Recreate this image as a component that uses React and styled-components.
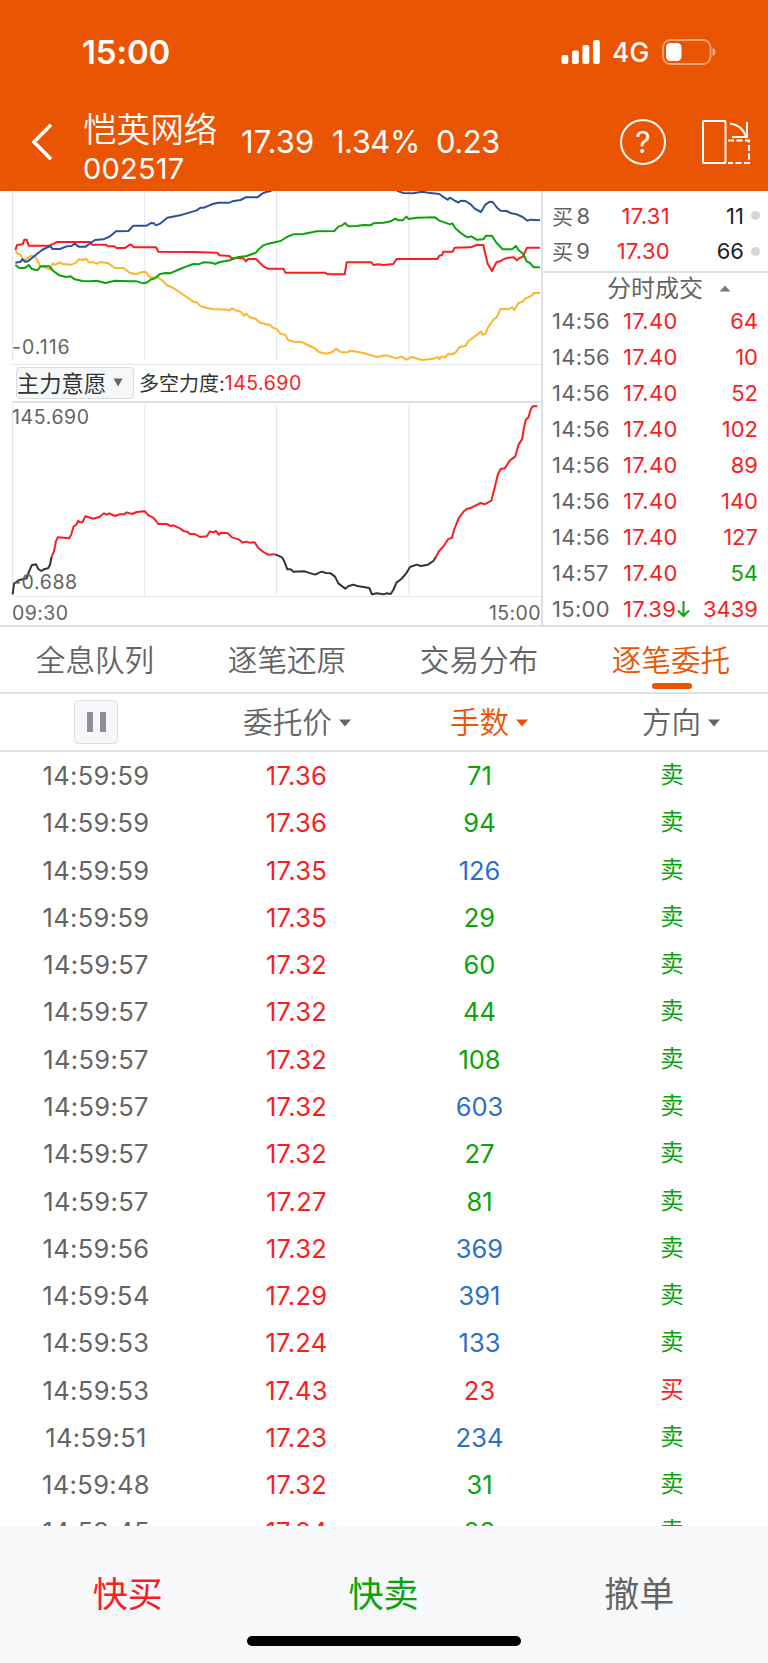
import styled, { createGlobalStyle } from "styled-components";

const GlobalStyle = createGlobalStyle`
  * {
    box-sizing: border-box;
  }
  body {
    margin: 0;
    background-color: #ffffff;
    font-family: Inter, "Noto Sans CJK SC", sans-serif;
  }
`;

const colors = {
  orange: "#ea5504",
  red: "#f91d1f",
  green: "#0aa30a",
  blue: "#2a70c8",
  gray: "#646464",
  dark: "#222222",
  line: "#dfe0e6",
};

const Screen = styled.div`
  width: 768px;
  height: 1663px;
  display: flex;
  flex-direction: column;
  overflow: hidden;
  background-color: #ffffff;
`;

const Header = styled.header`
  flex: none;
  height: 191px;
  background-color: ${colors.orange};
  color: #ffffff;
`;

const StatusBar = styled.div`
  height: 103px;
  padding: 0 51px 0 82px;
  display: flex;
  align-items: center;
  justify-content: space-between;
`;

const Clock = styled.span`
  font-size: 33px;
  font-weight: 600;
  letter-spacing: -0.1px;
`;

const StatusIcons = styled.div`
  display: flex;
  align-items: center;
`;

const Network = styled.span`
  width: 62px;
  padding-left: 12px;
  font-size: 26.5px;
  font-weight: 450;
`;

const Nav = styled.div`
  height: 77px;
  padding: 0 18px 0 31px;
  display: flex;
  align-items: center;
`;

const Title = styled.div`
  width: 158px;
  margin: 15px 0 0 30px;
  display: flex;
  flex-direction: column;
`;

const StockName = styled.span`
  height: 39px;
  font-size: 33.6px;
  font-weight: 350;
  line-height: 39px;
  white-space: nowrap;
`;

const StockCode = styled.span`
  height: 40px;
  font-size: 29px;
  line-height: 40px;
  letter-spacing: 0.2px;
`;

const Quote = styled.span`
  width: ${(props) => props.$width}px;
  font-size: 31px;
  letter-spacing: ${(props) => props.$spacing || "-0.5px"};
  white-space: nowrap;
`;

const Help = styled.button`
  width: 46px;
  height: 46px;
  margin: 0 35px 0 auto;
  padding: 0;
  border: 2px solid #ffffff;
  border-radius: 50%;
  background: none;
  color: #ffffff;
  font-family: inherit;
  font-size: 30px;
  line-height: 42px;
`;

const Market = styled.section`
  flex: none;
  height: 436px;
  display: flex;
  border-bottom: 2px solid ${colors.line};
`;

const Charts = styled.div`
  width: 543px;
  display: flex;
  flex-direction: column;
  border-right: 2px solid ${colors.line};
`;

const ChartBox = styled.div`
  position: relative;
  flex: none;
  height: ${(props) => props.$height}px;
  svg {
    display: block;
  }
`;

const AxisLabel = styled.span`
  position: absolute;
  left: 12px;
  top: ${(props) => props.$top}px;
  color: ${colors.gray};
  font-size: 19.5px;
  line-height: 22px;
  letter-spacing: ${(props) => props.$spacing || "0.6px"};
`;

const ChartToolbar = styled.div`
  flex: none;
  height: 39.5px;
  margin-left: 12px;
  padding-left: 4px;
  display: flex;
  align-items: center;
  border-top: 1px solid #e6e8ee;
  border-bottom: 2px solid ${colors.line};
  color: #333333;
  font-size: 20px;
`;

const IndexSelect = styled.button`
  width: 118px;
  height: 32px;
  margin-right: 5px;
  padding: 0 10px 2px 0;
  display: flex;
  align-items: center;
  justify-content: space-between;
  border: 1px solid #d8dbe0;
  border-radius: 4px;
  background-color: #f6f7f9;
  color: #333333;
  font-family: inherit;
  font-size: 22.3px;
  white-space: nowrap;
  svg {
    margin-top: 2px;
  }
`;

const Strength = styled.span`
  color: ${colors.red};
  font-size: 19.5px;
  letter-spacing: 0.5px;
`;

const TimeAxis = styled.div`
  height: 28px;
  padding: 3px 0 0 12px;
  display: flex;
  align-items: center;
  justify-content: space-between;
  color: ${colors.gray};
  font-size: 19.5px;
  letter-spacing: 0.4px;
`;

const Side = styled.div`
  flex: 1;
  font-size: 22px;
`;

const BuyQueue = styled.div`
  height: 82px;
  padding-top: 7px;
  border-bottom: 2px solid ${colors.line};
`;

const BuyRow = styled.div`
  height: 35.5px;
  padding: 0 8px 0 9px;
  display: flex;
  align-items: center;
  color: ${colors.gray};
`;

const Level = styled.span`
  width: 38px;
  display: flex;
  align-items: center;
  justify-content: space-between;
`;

const LevelSide = styled.span`
  padding-bottom: 2px;
  font-size: 21px;
`;

const BuyPrice = styled.span`
  width: 80px;
  color: ${colors.red};
  text-align: right;
  letter-spacing: 0.3px;
`;

const BuyVolume = styled.span`
  width: 74px;
  color: ${colors.dark};
  text-align: right;
`;

const Dot = styled.i`
  width: 9px;
  height: 9px;
  margin-left: auto;
  border-radius: 50%;
  background-color: #d3d6dc;
`;

const DealTitle = styled.div`
  height: 30px;
  padding: 0 0 3px 64px;
  display: flex;
  align-items: center;
  gap: 16px;
  color: ${colors.gray};
  font-size: 24px;
  svg {
    margin-top: 3px;
  }
`;

const DealRow = styled.div`
  height: 36px;
  padding: 0 10px 0 9px;
  display: flex;
  align-items: center;
  color: ${colors.gray};
`;

const DealTime = styled.span`
  width: 71px;
  letter-spacing: 0.3px;
`;

const DealPrice = styled.span`
  display: flex;
  align-items: center;
  gap: 1px;
  color: ${colors.red};
  letter-spacing: 0.3px;
`;

const DealVolume = styled.span`
  margin-left: auto;
  color: ${(props) => (props.$sell ? colors.green : colors.red)};
`;

const Tabs = styled.nav`
  flex: none;
  height: 67px;
  display: grid;
  grid-template-columns: repeat(4, 1fr);
  border-bottom: 2px solid ${colors.line};
`;

const Tab = styled.button`
  position: relative;
  padding: 0 2px 3px 0;
  border: none;
  background: none;
  color: ${(props) => (props.$active ? colors.orange : colors.gray)};
  font-family: inherit;
  font-size: 29.6px;
  font-weight: 350;
  &::after {
    content: "";
    position: absolute;
    left: 76px;
    bottom: 3px;
    width: 40px;
    height: 6px;
    border-radius: 3px;
    background-color: ${(props) => (props.$active ? colors.orange : "transparent")};
  }
`;

const Columns = styled.div`
  flex: none;
  height: 58px;
  display: grid;
  grid-template-columns: repeat(4, 1fr);
  align-items: center;
  justify-items: center;
  border-bottom: 2px solid ${colors.line};
`;

const Pause = styled.button`
  width: 44px;
  height: 44px;
  padding: 0;
  display: flex;
  align-items: center;
  justify-content: center;
  gap: 7px;
  border: 1.5px solid #dcdee4;
  border-radius: 4px;
  background-color: #f6f7f9;
  span {
    width: 6px;
    height: 20px;
    background-color: #8e8e96;
  }
`;

const Column = styled.div`
  position: relative;
  margin-right: 1px;
  color: ${(props) => (props.$active ? colors.orange : colors.gray)};
  font-size: 29.6px;
  font-weight: 350;
  line-height: 40px;
  svg {
    position: absolute;
    left: calc(100% + 6px);
    top: 17px;
  }
`;

const OrderList = styled.div`
  flex: 1;
  min-height: 0;
  overflow: hidden;
`;

const OrderRow = styled.div`
  height: 47.27px;
  display: grid;
  grid-template-columns: repeat(4, 192px);
  align-items: center;
  justify-items: center;
  font-size: 25.5px;
`;

const OrderTime = styled.span`
  color: ${colors.gray};
  letter-spacing: 0.35px;
`;

const OrderPrice = styled.span`
  padding-left: 17px;
  color: ${colors.red};
  letter-spacing: 0.3px;
`;

const OrderVolume = styled.span`
  padding-right: 1px;
  color: ${(props) => props.$color};
`;

const OrderSide = styled.span`
  padding-bottom: 1px;
  color: ${(props) => (props.$buy ? colors.red : colors.green)};
  font-size: 23.5px;
  line-height: 32px;
`;

const Footer = styled.footer`
  flex: none;
  height: 137px;
  display: flex;
  flex-direction: column;
  align-items: center;
  background-color: #f7f8fa;
`;

const Actions = styled.div`
  width: 100%;
  height: 110px;
  padding: 21px 1px 0 0;
  display: grid;
  grid-template-columns: repeat(3, 1fr);
`;

const Action = styled.button`
  border: none;
  background: none;
  color: ${(props) => props.$color};
  font-family: inherit;
  font-size: 35px;
  font-weight: 380;
`;

const HomeIndicator = styled.div`
  width: 274px;
  height: 10px;
  border-radius: 5px;
  background-color: #000000;
`;

const deals = [
  ["14:56", "17.40", 64],
  ["14:56", "17.40", 10],
  ["14:56", "17.40", 52],
  ["14:56", "17.40", 102],
  ["14:56", "17.40", 89],
  ["14:56", "17.40", 140],
  ["14:56", "17.40", 127],
  ["14:57", "17.40", 54, "sell"],
  ["15:00", "17.39", 3439, "down"],
];

const orders = [
  ["14:59:59", "17.36", 71],
  ["14:59:59", "17.36", 94],
  ["14:59:59", "17.35", 126],
  ["14:59:59", "17.35", 29],
  ["14:59:57", "17.32", 60],
  ["14:59:57", "17.32", 44],
  ["14:59:57", "17.32", 108],
  ["14:59:57", "17.32", 603],
  ["14:59:57", "17.32", 27],
  ["14:59:57", "17.27", 81],
  ["14:59:56", "17.32", 369],
  ["14:59:54", "17.29", 391],
  ["14:59:53", "17.24", 133],
  ["14:59:53", "17.43", 23, "买"],
  ["14:59:51", "17.23", 234],
  ["14:59:48", "17.32", 31],
  ["14:59:45", "17.24", 28],
];

const tabs = ["全息队列", "逐笔还原", "交易分布", "逐笔委托"];

// chart points use a grid of three units to the pixel
const flow = {
  red: "46,195 51,180 68,178 73,164 80,164 86,182 148,182 172,171 270,171 276,179 318,179 324,184 343,184 349,189 376,189 388,179 394,179 402,187 468,187 475,200 580,201 652,203 658,211 688,213 694,219 730,220 738,229 744,222 768,222 790,244 803,251 850,251 856,263 976,263 982,268 1034,268 1040,232 1114,232 1120,240 1135,238 1150,240 1180,237 1190,222 1312,222 1318,212 1326,210 1330,200 1358,200 1364,188 1412,187 1430,180 1450,180 1463,236 1476,258 1490,231 1500,229 1512,222 1525,218 1542,217 1550,226 1560,218 1568,216 1581,188 1620,188",
  yellow:
    "46,198 54,207 60,207 68,222 78,224 92,212 105,215 112,225 120,243 135,247 150,254 158,235 165,240 178,232 188,237 215,239 228,233 236,223 248,225 258,221 266,232 280,232 290,236 302,231 325,235 345,249 370,249 390,264 410,267 425,261 437,261 452,279 470,275 485,285 500,300 520,309 560,336 580,350 590,352 602,364 635,372 680,374 688,377 696,370 706,376 722,380 733,392 739,386 750,397 768,402 780,413 812,421 818,428 830,432 840,445 856,450 864,465 882,470 908,472 928,483 944,489 956,501 978,506 996,502 1008,491 1022,501 1042,502 1050,497 1075,501 1105,508 1130,516 1160,511 1190,520 1204,515 1220,524 1236,516 1265,525 1300,521 1314,516 1318,522 1326,514 1335,517 1344,507 1358,508 1370,499 1378,486 1398,482 1404,469 1422,456 1443,440 1448,449 1456,447 1464,427 1482,402 1490,397 1502,371 1525,373 1536,367 1543,375 1555,354 1568,350 1576,340 1594,333 1602,324 1620,324",
  blueLeft:
    "46,233 62,230 67,223 75,230 84,229 104,212 126,195 150,183 158,192 180,192 200,184 214,183 224,176 236,185 257,185 272,174 285,165 310,163 330,154 348,139 385,138 400,122 440,122 453,114 462,115 468,121 480,116 502,98 540,91 590,76 602,68 612,68 635,58 655,53 688,53 697,49 722,45 737,37 772,37 788,25 798,21 815,17",
  blueRight:
    "1190,17 1210,24 1240,25 1265,20 1285,23 1318,27 1332,37 1343,44 1350,38 1366,48 1376,53 1382,47 1396,48 1412,58 1424,71 1443,81 1456,59 1470,50 1478,51 1492,69 1502,77 1520,78 1533,85 1550,88 1568,96 1582,107 1592,104 1620,106",
  green:
    "46,240 58,249 75,249 86,240 96,252 112,256 122,244 148,244 160,258 178,271 198,276 212,274 224,283 248,288 270,289 290,287 316,294 345,287 385,289 410,289 430,295 442,292 452,284 465,280 480,267 497,264 510,265 540,252 560,244 580,237 596,238 610,232 635,233 645,237 660,231 690,226 712,217 740,213 768,203 775,194 790,181 805,176 842,168 860,156 880,148 910,147 950,139 1003,138 1015,125 1025,122 1035,114 1045,124 1070,123 1090,120 1112,121 1120,115 1150,113 1172,109 1186,101 1195,106 1208,106 1219,95 1226,102 1250,98 1305,97 1318,107 1350,118 1357,115 1366,130 1380,142 1395,153 1404,157 1413,154 1430,164 1450,163 1458,152 1475,152 1490,174 1508,193 1536,193 1548,183 1556,196 1570,207 1580,229 1590,234 1601,247 1620,247",
};

const power = [
  ["#333333", "38,598 42,566 58,555 80,550 86,532 95,511 108,508 115,522 124,528 132,523 144,520 150,510 155,484"],
  [colors.red, "155,484 162,470 168,438 174,427 208,430 214,418 221,394 228,390 235,377 240,382 247,382 256,364 280,371 298,366 312,355 320,359 328,355 345,363 358,358 372,358 380,352 396,357 410,351 435,349 445,361 460,368 475,387 500,387 512,393 520,391 540,400 552,409 562,410 570,417 584,417 600,426 620,424 630,409 640,412 648,408 656,419 664,413 684,415 696,427 718,434 728,443 738,440 748,443 764,442 775,459 790,471 804,479 826,478"],
  ["#333333", "826,478 846,487 852,497 862,523 872,523 880,530 914,529 945,539 965,530 978,534 992,535 1005,545 1015,565 1036,581 1046,573 1060,569 1072,573 1108,579 1116,598 1130,595 1150,598 1160,595 1172,597 1180,585 1190,562 1204,552 1218,536 1230,516 1250,509 1262,513 1284,509 1300,498 1308,485"],
  [colors.red, "1308,485 1316,470 1332,452 1344,433 1356,428 1362,405 1376,370 1392,348 1402,341 1414,338 1442,324 1454,328 1474,317 1482,286 1488,262 1494,237 1502,222 1514,220 1530,196 1546,184 1556,148 1566,133 1572,98 1578,73 1585,68 1592,44 1598,34 1612,34"],
];

const Line = ({ points, color }) => (
  <polyline points={points} fill="none" stroke={color} strokeWidth="6" strokeLinejoin="round" />
);

const Grid = ({ top, bottom }) => (
  <path
    d={[37.5, 433.5, 829.5, 1227].map((x) => `M${x} ${top}V${bottom}`).join("")}
    stroke="#e6e8f0"
    strokeWidth="3.5"
  />
);

const Caret = () => (
  <svg width="14" height="8" viewBox="0 0 14 8">
    <path d="M1 0.5H13L7 7.5Z" fill="currentColor" />
  </svg>
);

const volumeColor = (volume, side) => {
  if (side) return colors.red;
  return volume > 120 ? colors.blue : colors.green;
};

const App = () => {
  return (
    <Screen>
      <GlobalStyle />
      <Header>
        <StatusBar>
          <Clock>15:00</Clock>
          <StatusIcons>
            <svg width="39" height="26" viewBox="0 0 39 26" fill="#ffffff">
              <rect x="0.5" y="16" width="6.8" height="9" rx="2" />
              <rect x="11" y="11.5" width="6.8" height="13.5" rx="2" />
              <rect x="21.5" y="6" width="6.8" height="19" rx="2" />
              <rect x="32" y="1" width="6.8" height="24" rx="2" />
            </svg>
            <Network>4G</Network>
            <svg width="55" height="26" viewBox="0 0 55 26">
              <rect x="1" y="1" width="47.5" height="24" rx="7.5" fill="none" stroke="#ffffff" strokeOpacity="0.45" strokeWidth="1.8" />
              <rect x="4" y="4" width="15.5" height="18" rx="4.5" fill="#ffffff" />
              <path d="M50.5 9C54.5 10 54.5 16 50.5 17Z" fill="#ffffff" fillOpacity="0.5" />
            </svg>
          </StatusIcons>
        </StatusBar>
        <Nav>
          <svg width="22" height="38" viewBox="0 0 22 38">
            <path d="M20 1.8L3 19L20 36.2" fill="none" stroke="#ffffff" strokeWidth="3.6" />
          </svg>
          <Title>
            <StockName>恺英网络</StockName>
            <StockCode>002517</StockCode>
          </Title>
          <Quote $width={91} $spacing="0.1px">17.39</Quote>
          <Quote $width={104}>1.34%</Quote>
          <Quote $width={70}>0.23</Quote>
          <Help>?</Help>
          <svg width="49" height="46" viewBox="0 0 49 46" fill="none" stroke="#ffffff" strokeWidth="2">
            <rect x="2" y="2" width="22.5" height="42" rx="1" />
            <path d="M29 4.5C37 5.5 42 9 45 17.5" />
            <path d="M46 3V18H31" />
            <path d="M27 21.5H48V44H27" strokeDasharray="6 2.5" />
          </svg>
        </Nav>
      </Header>

      <Market>
        <Charts>
          <ChartBox $height={172.5}>
            <svg width="541" height="172" viewBox="0 18 1623 516">
              <Grid top={15} bottom={526} />
              <Line points={flow.yellow} color="#fdb52b" />
              <Line points={flow.red} color={colors.red} />
              <Line points={flow.blueLeft} color="#28529a" />
              <Line points={flow.blueRight} color="#28529a" />
              <Line points={flow.green} color={colors.green} />
            </svg>
            <AxisLabel $top={145} $spacing="1px">-0.116</AxisLabel>
          </ChartBox>
          <ChartToolbar>
            <IndexSelect>
              主力意愿
              <svg width="10" height="9" viewBox="0 0 10 9">
                <path d="M0.5 0.5H9.5L5 8.5Z" fill="#666666" />
              </svg>
            </IndexSelect>
            多空力度:<Strength>145.690</Strength>
          </ChartToolbar>
          <ChartBox $height={194}>
            <svg width="541" height="194" viewBox="0 24 1623 582">
              <Grid top={30} bottom={601} />
              <path d="M36 604.5H1623" stroke="#e6e8ee" strokeWidth="3" />
              {power.map(([color, points]) => (
                <Line key={points} points={points} color={color} />
              ))}
            </svg>
            <AxisLabel $top={3}>145.690</AxisLabel>
            <AxisLabel $top={168}>-0.688</AxisLabel>
          </ChartBox>
          <TimeAxis>
            <span>09:30</span>
            <span>15:00</span>
          </TimeAxis>
        </Charts>

        <Side>
          <BuyQueue>
            <BuyRow>
              <Level><LevelSide>买</LevelSide><span>8</span></Level>
              <BuyPrice>17.31</BuyPrice>
              <BuyVolume>11</BuyVolume>
              <Dot />
            </BuyRow>
            <BuyRow>
              <Level><LevelSide>买</LevelSide><span>9</span></Level>
              <BuyPrice>17.30</BuyPrice>
              <BuyVolume>66</BuyVolume>
              <Dot />
            </BuyRow>
          </BuyQueue>
          <DealTitle>
            分时成交
            <svg width="12" height="7" viewBox="0 0 12 7">
              <path d="M0.5 6.5H11.5L6 0.5Z" fill="#77777c" />
            </svg>
          </DealTitle>
          {deals.map(([time, price, volume, mark], index) => (
            <DealRow key={index}>
              <DealTime>{time}</DealTime>
              <DealPrice>
                {price}
                {mark === "down" && (
                  <svg width="13" height="18" viewBox="0 0 13 18" fill="none" stroke={colors.green} strokeWidth="2">
                    <path d="M6.5 1V16M1 10.5L6.5 16L12 10.5" />
                  </svg>
                )}
              </DealPrice>
              <DealVolume $sell={mark === "sell"}>{volume}</DealVolume>
            </DealRow>
          ))}
        </Side>
      </Market>

      <Tabs>
        {tabs.map((tab, index) => (
          <Tab key={tab} $active={index === 3}>{tab}</Tab>
        ))}
      </Tabs>

      <Columns>
        <Pause>
          <span />
          <span />
        </Pause>
        <Column>委托价<Caret /></Column>
        <Column $active>手数<Caret /></Column>
        <Column>方向<Caret /></Column>
      </Columns>

      <OrderList>
        {orders.map(([time, price, volume, side], index) => (
          <OrderRow key={index}>
            <OrderTime>{time}</OrderTime>
            <OrderPrice>{price}</OrderPrice>
            <OrderVolume $color={volumeColor(volume, side)}>{volume}</OrderVolume>
            <OrderSide $buy={side === "买"}>{side || "卖"}</OrderSide>
          </OrderRow>
        ))}
      </OrderList>

      <Footer>
        <Actions>
          <Action $color={colors.red}>快买</Action>
          <Action $color={colors.green}>快卖</Action>
          <Action $color={colors.gray}>撤单</Action>
        </Actions>
        <HomeIndicator />
      </Footer>
    </Screen>
  );
};

export default App;
